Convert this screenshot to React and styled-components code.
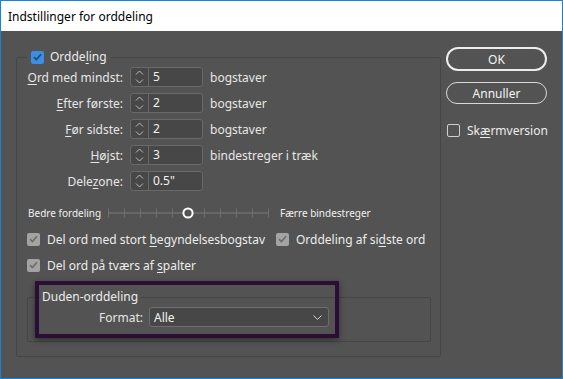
import styled, { createGlobalStyle } from "styled-components";

const GlobalStyle = createGlobalStyle`
  html, body { margin: 0; padding: 0; background: #535353; }
  body { font-family: "Noto Sans", "Open Sans", sans-serif; }
`;

const Window = styled.div`
  width: 563px;
  height: 379px;
  box-sizing: border-box;
  border: 1px solid #1883d7;
  background: #535353;
  display: flex;
  flex-direction: column;
  overflow: hidden;
`;

const TitleBar = styled.div`
  height: 30px;
  flex: none;
  background: #fff;
  display: flex;
  align-items: center;
  padding-left: 7px;
  font-size: 12px;
  color: #000;
`;

const Body = styled.div`
  display: flex;
  gap: 5px;
  padding: 18px 0 0 15px;
  color: #e6e6e6;
  font-size: 12px;
`;

const Group = styled.fieldset`
  position: relative;
  margin: 0;
  border: 1px solid #454545;
  border-radius: 2px;
  padding: ${(p) => p.$pad};
  width: ${(p) => p.$width}px;
  box-sizing: border-box;
  min-width: 0;
`;

const Legend = styled.legend`
  padding: 0 ${(p) => p.$pad}px;
  height: 16px;
  line-height: 16px;
  display: flex;
  align-items: center;
  gap: 6px;
  font-size: 12px;
  color: #ececec;
`;

const Rows = styled.div`
  display: flex;
  flex-direction: column;
  gap: 6px;
  margin-top: 2px;
`;

const Row = styled.div`
  display: flex;
  align-items: center;
  height: 20px;
  gap: ${(p) => p.$gap ?? 7}px;
  margin-top: ${(p) => p.$top ?? 0}px;
`;

const Label = styled.span`
  width: ${(p) => p.$width}px;
  text-align: right;
  white-space: nowrap;
`;

const Key = styled.u`
  text-decoration: underline;
  text-underline-offset: 2px;
  text-decoration-thickness: 1px;
`;

const Spinner = styled.div`
  width: 73px;
  height: 20px;
  box-sizing: border-box;
  border: 1px solid #696969;
  border-radius: 3px;
  background: #474747;
  display: flex;
  align-items: stretch;
`;

const Arrows = styled.div`
  width: 17px;
  border-right: 1px solid #696969;
  display: flex;
  align-items: center;
  justify-content: center;
`;

const Value = styled.span`
  padding-left: 4px;
  line-height: 18px;
  color: #f2f2f2;
`;

const Unit = styled.span`
  white-space: nowrap;
`;

const SliderRow = styled.div`
  display: flex;
  align-items: center;
  height: 14px;
  margin-top: 15px;
  padding-left: 1px;
  font-size: 10px;
  color: #f0f0f0;
`;

const SliderText = styled.span`
  width: ${(p) => (p.$width ? `${p.$width}px` : "auto")};
  margin-left: ${(p) => p.$left ?? 0}px;
  white-space: nowrap;
`;

const Checks = styled.div`
  display: grid;
  grid-template-columns: 249px auto;
  row-gap: 10px;
  margin-top: 11px;
`;

const CheckItem = styled.label`
  display: flex;
  align-items: center;
  gap: 7px;
  height: 16px;
  white-space: nowrap;
  color: #ececec;
`;

const Box = styled.span`
  width: 13px;
  height: 13px;
  box-sizing: border-box;
  border-radius: 2px;
  flex: none;
  display: flex;
  align-items: center;
  justify-content: center;
  background: ${(p) => (p.$tone === "blue" ? "#3c8de4" : p.$tone === "gray" ? "#a3a3a3" : "transparent")};
  border: ${(p) => (p.$tone === "empty" ? "1px solid #cfcfcf" : "none")};
`;

const Duden = styled(Group)`
  margin-top: 16px;
`;

const Highlight = styled.div`
  position: absolute;
  left: 7px;
  top: -24px;
  width: 304px;
  height: 57px;
  box-sizing: border-box;
  border: 4px solid #2a0e35;
  box-shadow: 0 2px 6px rgba(0, 0, 0, 0.45);
  pointer-events: none;
`;

const Select = styled.div`
  width: 180px;
  height: 20px;
  box-sizing: border-box;
  border: 1px solid #6e6e6e;
  border-radius: 3px;
  background: #474747;
  display: flex;
  align-items: center;
  justify-content: space-between;
  padding: 0 6px 0 4px;
  color: #f2f2f2;
`;

const Side = styled.div`
  width: 101px;
  display: flex;
  flex-direction: column;
`;

const Button = styled.button`
  height: ${(p) => (p.$primary ? 24 : 22)}px;
  margin-top: ${(p) => (p.$primary ? -2 : 11)}px;
  border: ${(p) => (p.$primary ? "2px solid #ececec" : "1px solid #d8d8d8")};
  border-radius: 12px;
  background: transparent;
  color: #f4f4f4;
  font-family: inherit;
  font-size: 12px;
  padding: 0;
`;

const SideCheck = styled(CheckItem)`
  margin-top: 18px;
  padding-left: 1px;
`;

const Check = ({ color }) => (
  <svg width="9" height="8" viewBox="0 0 9 8">
    <path d="M1 4.2 L3.4 6.5 L8 1.2" fill="none" stroke={color} strokeWidth="1.6" />
  </svg>
);

const Updown = () => (
  <svg width="9" height="16" viewBox="0 0 9 16">
    <path d="M1 5.5 L4.5 2 L8 5.5 M1 10.5 L4.5 14 L8 10.5" fill="none" stroke="#bdbdbd" strokeWidth="1" />
  </svg>
);

const Slider = () => {
  const ticks = [0, 16, 32, 48, 64, 96, 112, 128, 144, 160];
  return (
    <svg width="163" height="14" viewBox="0 0 163 14">
      <line x1="1" y1="7" x2="161" y2="7" stroke="#7a7a7a" strokeWidth="1" />
      {ticks.map((t) => (
        <line key={t} x1={t + 1.5} y1="2.5" x2={t + 1.5} y2="11.5" stroke="#6f6f6f" strokeWidth="1" />
      ))}
      <circle cx="81" cy="7" r="4.6" fill="#535353" stroke="#fff" strokeWidth="2" />
    </svg>
  );
};

const fields = [
  { label: ["", "O", "rd med mindst:"], value: "5", unit: "bogstaver" },
  { label: ["", "E", "fter første:"], value: "2", unit: "bogstaver" },
  { label: ["", "F", "ør sidste:"], value: "2", unit: "bogstaver" },
  { label: ["", "H", "øjst:"], value: "3", unit: "bindestreger i træk" },
  { label: ["Dele", "z", "one:"], value: "0.5\"", unit: "" },
];

export default function App() {
  return (
    <>
      <GlobalStyle />
      <Window>
        <TitleBar>Indstillinger for orddeling</TitleBar>
        <Body>
          <Group $width={425} $pad="0 9px 14px 10px">
            <Legend $pad={4}>
              <Box $tone="blue">
                <Check color="#23456b" />
              </Box>
              <span>
                Ordde<Key>l</Key>ing
              </span>
            </Legend>
            <Rows>
              {fields.map((f) => (
                <Row key={f.label.join("")}>
                  <Label $width={96}>
                    {f.label[0]}
                    <Key>{f.label[1]}</Key>
                    {f.label[2]}
                  </Label>
                  <Spinner>
                    <Arrows>
                      <Updown />
                    </Arrows>
                    <Value>{f.value}</Value>
                  </Spinner>
                  <Unit>{f.unit}</Unit>
                </Row>
              ))}
            </Rows>
            <SliderRow>
              <SliderText $width={79}>Bedre fordeling</SliderText>
              <Slider />
              <SliderText $left={10}>Færre bindestreger</SliderText>
            </SliderRow>
            <Checks>
              <CheckItem>
                <Box $tone="gray">
                  <Check color="#6c6c6c" />
                </Box>
                <span>
                  Del ord med stort <Key>b</Key>egyndelsesbogstav
                </span>
              </CheckItem>
              <CheckItem>
                <Box $tone="gray">
                  <Check color="#6c6c6c" />
                </Box>
                <span>
                  Orddeling af si<Key>d</Key>ste ord
                </span>
              </CheckItem>
              <CheckItem>
                <Box $tone="gray">
                  <Check color="#6c6c6c" />
                </Box>
                <span>
                  Del ord på tværs af <Key>s</Key>palter
                </span>
              </CheckItem>
            </Checks>
            <Duden $width={404} $pad="0 12px 14px 12px">
              <Legend $pad={2}>Duden-orddeling</Legend>
              <Row $gap={6} $top={2}>
                <Label $width={103}>Format:</Label>
                <Select>
                  <span>Alle</span>
                  <svg width="9" height="5" viewBox="0 0 9 5">
                    <path d="M0.5 0.5 L4.5 4.5 L8.5 0.5" fill="none" stroke="#d0d0d0" strokeWidth="1" />
                  </svg>
                </Select>
              </Row>
              <Highlight />
            </Duden>
          </Group>
          <Side>
            <Button $primary>OK</Button>
            <Button>Annuller</Button>
            <SideCheck>
              <Box $tone="empty" />
              <span>
                Sk<Key>æ</Key>rmversion
              </span>
            </SideCheck>
          </Side>
        </Body>
      </Window>
    </>
  );
}
